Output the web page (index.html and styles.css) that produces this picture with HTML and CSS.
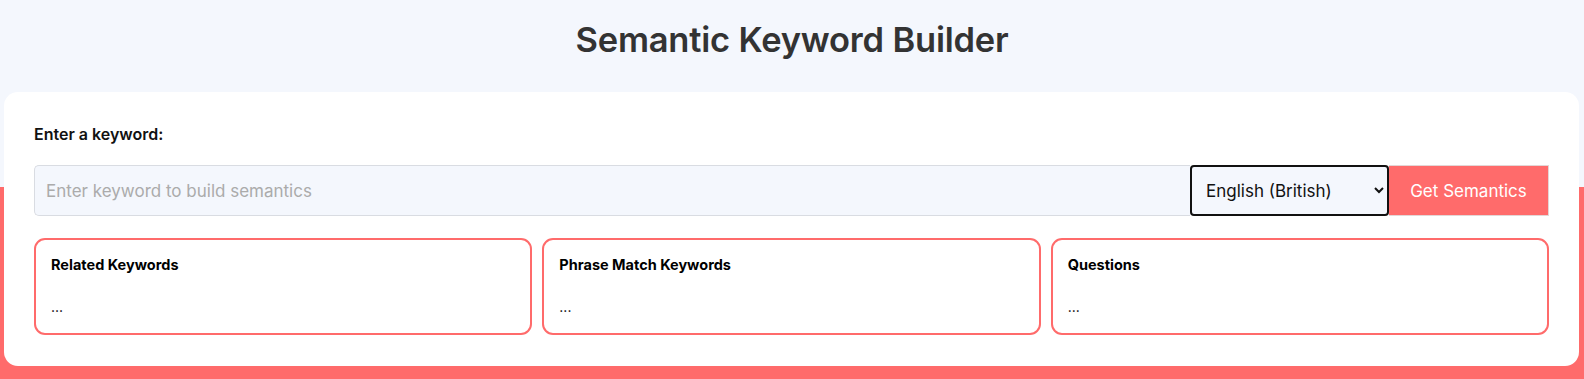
FILE: index.html
```html
<!DOCTYPE html>
<html lang="en">
<head>
<meta charset="utf-8">
<title>Semantic Keyword Builder</title>
<link rel="stylesheet" href="styles.css">
</head>
<body>
  <header class="header">
    <h1 class="title">Semantic Keyword Builder</h1>
  </header>
  <main class="card">
    <label class="label" for="kw">Enter a keyword:</label>
    <div class="search-row">
      <input id="kw" class="kw-input" type="text" placeholder="Enter keyword to build semantics">
      <select class="lang-select">
        <option>English (British)</option>
      </select>
      <button class="go-btn" type="button">Get Semantics</button>
    </div>
    <div class="results">
      <section class="result-box">
        <h2 class="result-title">Related Keywords</h2>
        <p class="result-text">...</p>
      </section>
      <section class="result-box">
        <h2 class="result-title">Phrase Match Keywords</h2>
        <p class="result-text">...</p>
      </section>
      <section class="result-box">
        <h2 class="result-title">Questions</h2>
        <p class="result-text">...</p>
      </section>
    </div>
  </main>
</body>
</html>
```
FILE: styles.css
```css
* { box-sizing: border-box; }
html, body { margin: 0; padding: 0; }
body {
  font-family: Inter, "Noto Sans", "Liberation Sans", sans-serif;
  background: linear-gradient(to bottom, #f4f7fd 0, #f4f7fd 187px, #ff6b6b 187px, #ff6b6b 100%);
  min-height: 379px;
  color: #111;
}
.header {
  height: 92px;
  display: flex;
  align-items: center;
  justify-content: center;
}
.title {
  margin: 0;
  font-size: 34.5px;
  font-weight: 600;
  color: #333;
  line-height: 44px;
  padding-bottom: 13px;
  letter-spacing: -0.2px;
}
.card {
  display: block;
  margin: 0 5px 0 4px;
  background: #fff;
  border-radius: 14px;
  padding: 30px 30px 31px;
}
.label {
  display: block;
  font-size: 16px;
  font-weight: 600;
  line-height: 24px;
  color: #111;
  margin-bottom: 19px;
}
.search-row {
  display: flex;
  height: 51px;
}
.kw-input {
  flex: 1;
  min-width: 0;
  height: 51px;
  background: #f4f7fd;
  border: 1px solid #d9dce2;
  border-right: none;
  border-radius: 5px 0 0 5px;
  padding: 0 11px;
  font-family: inherit;
  font-size: 17px;
  color: #111;
  outline: none;
}
.kw-input::placeholder { color: #ababab; }
.lang-select {
  width: 199px;
  height: 51px;
  background: #f4f7fd;
  border: 2px solid #111;
  border-radius: 4px;
  padding: 0 10px;
  font-family: inherit;
  font-size: 17px;
  color: #111;
}
.go-btn {
  width: 160px;
  height: 51px;
  background: #ff6b6b;
  color: #fff;
  border: 1px solid #e3d6d6;
  border-left: none;
  font-family: inherit;
  font-size: 17px;
  padding: 0;
}
.results {
  display: grid;
  grid-template-columns: repeat(3, 1fr);
  gap: 10px;
  margin-top: 22px;
}
.result-box {
  border: 2px solid #ff6b6b;
  border-radius: 11px;
  padding: 15px 15px 16px;
  height: 97px;
}
.result-title {
  margin: 0 0 22px;
  font-size: 14.5px;
  font-weight: 700;
  line-height: 20px;
  color: #000;
}
.result-text {
  margin: 0;
  font-size: 14px;
  line-height: 20px;
  color: #000;
}
```
